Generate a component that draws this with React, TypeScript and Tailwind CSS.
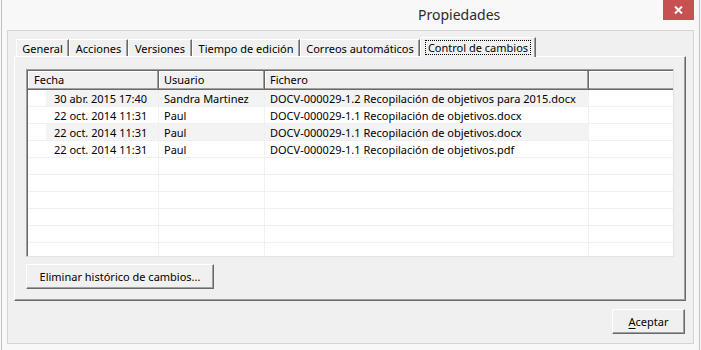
import React from "react";

const tabs = [
  { label: "General", w: "w-[53px]" },
  { label: "Acciones", w: "w-[59px]" },
  { label: "Versiones", w: "w-[64px]" },
  { label: "Tiempo de edición", w: "w-[108px]" },
  { label: "Correos automáticos", w: "w-[120px]" },
];

const rows = [
  { fecha: "30 abr. 2015 17:40", usuario: "Sandra Martinez", fichero: "DOCV-000029-1.2 Recopilación de objetivos para 2015.docx" },
  { fecha: "22 oct. 2014 11:31", usuario: "Paul", fichero: "DOCV-000029-1.1 Recopilación de objetivos.docx" },
  { fecha: "22 oct. 2014 11:31", usuario: "Paul", fichero: "DOCV-000029-1.1 Recopilación de objetivos.docx" },
  { fecha: "22 oct. 2014 11:31", usuario: "Paul", fichero: "DOCV-000029-1.1 Recopilación de objetivos.pdf" },
];

const raised =
  "bg-[#f0f0f0] border-t border-l border-white border-r border-b border-r-[#696969] border-b-[#696969] shadow-[inset_-1px_-1px_0_#a0a0a0]";

function HeaderCell({ label, className }: { label: string; className: string }) {
  return (
    <div
      className={`${className} h-full flex items-center bg-[#f0f0f0] border-r border-b border-[#696969] shadow-[inset_-1px_-1px_0_#a0a0a0,inset_1px_1px_0_#ffffff]`}
    >
      {label}
    </div>
  );
}

export default function App() {
  return (
    <div className="w-[701px] h-[350px] bg-[#f8f8f8] px-px overflow-hidden font-['Noto_Sans',sans-serif] text-[11px] text-black">
      <div className="h-full border-x border-[#c2c2c2] px-[5px] flex flex-col">
        {/* Title bar */}
        <div className="h-[30px] flex items-start shrink-0">
          <div className="pl-[411px] pt-[5px] text-[14px] leading-[20px] text-[#2b2b2b]">Propiedades</div>
          <div className="ml-auto w-[31px] h-[20px] bg-[#c75050] flex items-center justify-center">
            <svg width="9" height="8" viewBox="0 0 9 8">
              <path d="M1 0.5 L8 7.5 M8 0.5 L1 7.5" stroke="#ffffff" strokeWidth="2" />
            </svg>
          </div>
        </div>

        {/* Dialog body */}
        <div className="h-[314px] bg-[#f0f0f0] border border-[#d4d4d4] pt-[6px] pl-[6px] pr-[7px] flex flex-col">
          {/* Tab strip */}
          <div className="h-[19px] flex items-end pl-[2px] shrink-0">
            {tabs.map((t) => (
              <div
                key={t.label}
                className={`${t.w} h-[17px] flex items-center justify-center border-t border-l border-white border-r border-r-[#696969] shadow-[inset_-1px_0_0_#a0a0a0] leading-none`}
              >
                {t.label}
              </div>
            ))}
            <div className="relative z-10 w-[116px] h-[20px] -mb-px flex items-start justify-center pt-[2px] bg-[#f0f0f0] border-t border-l border-white border-r border-r-[#696969] shadow-[inset_-1px_0_0_#a0a0a0]">
              <span className="border border-dotted border-black px-[2px] h-[15px] flex items-center leading-none">
                Control de cambios
              </span>
            </div>
          </div>

          {/* Tab page */}
          <div className="h-[245px] border-t border-l border-white border-r border-b border-r-[#696969] border-b-[#696969] shadow-[inset_-1px_-1px_0_#a0a0a0] pt-[12px] pl-[11px] flex flex-col">
            {/* List */}
            <div className="w-[648px] h-[188px] bg-white border-t border-l border-[#a0a0a0] border-r border-b border-r-[#e3e3e3] border-b-[#e3e3e3] shadow-[inset_1px_1px_0_#696969] pt-px pl-px overflow-hidden flex flex-col">
              <div className="h-[19px] flex shrink-0">
                <HeaderCell label="Fecha" className="w-[131px] pl-[6px]" />
                <HeaderCell label="Usuario" className="w-[106px] pl-[5px]" />
                <HeaderCell label="Fichero" className="w-[324px] pl-[5px]" />
                <div className="flex-1 h-full bg-[#f0f0f0] border-b border-[#696969] shadow-[inset_0_-1px_0_#a0a0a0,inset_1px_1px_0_#ffffff]" />
              </div>
              {rows.map((r, i) => {
                const bg = i % 2 === 0 ? "bg-[#f3f3f3]" : "bg-white";
                return (
                  <div key={i} className="h-[17px] flex shrink-0 border-b border-[#f0f0f0] leading-none">
                    <div className="w-[131px] flex border-r border-[#f0f0f0]">
                      <div className="w-[18px] bg-white" />
                      <div className={`flex-1 ${bg} pl-[8px] flex items-center`}>{r.fecha}</div>
                    </div>
                    <div className={`w-[106px] ${bg} pl-[5px] flex items-center border-r border-[#f0f0f0]`}>{r.usuario}</div>
                    <div className={`w-[324px] ${bg} pl-[5px] flex items-center border-r border-[#f0f0f0] whitespace-nowrap`}>
                      {r.fichero}
                    </div>
                    <div className="flex-1" />
                  </div>
                );
              })}
              {Array.from({ length: 6 }).map((_, i) => (
                <div key={i} className="h-[17px] flex shrink-0 border-b border-[#f0f0f0]">
                  <div className="w-[131px] border-r border-[#f0f0f0]" />
                  <div className="w-[106px] border-r border-[#f0f0f0]" />
                  <div className="w-[324px] border-r border-[#f0f0f0]" />
                  <div className="flex-1" />
                </div>
              ))}
            </div>

            <button className={`mt-[7px] w-[188px] h-[25px] ${raised} flex items-center justify-center leading-none`}>
              Eliminar histórico de cambios...
            </button>
          </div>

          {/* Footer */}
          <div className="flex justify-end mt-[8px] pr-px">
            <button className={`w-[73px] h-[25px] ${raised} flex items-center justify-center leading-none`}>
              <span className="underline underline-offset-2">A</span>ceptar
            </button>
          </div>
        </div>
      </div>
    </div>
  );
}
